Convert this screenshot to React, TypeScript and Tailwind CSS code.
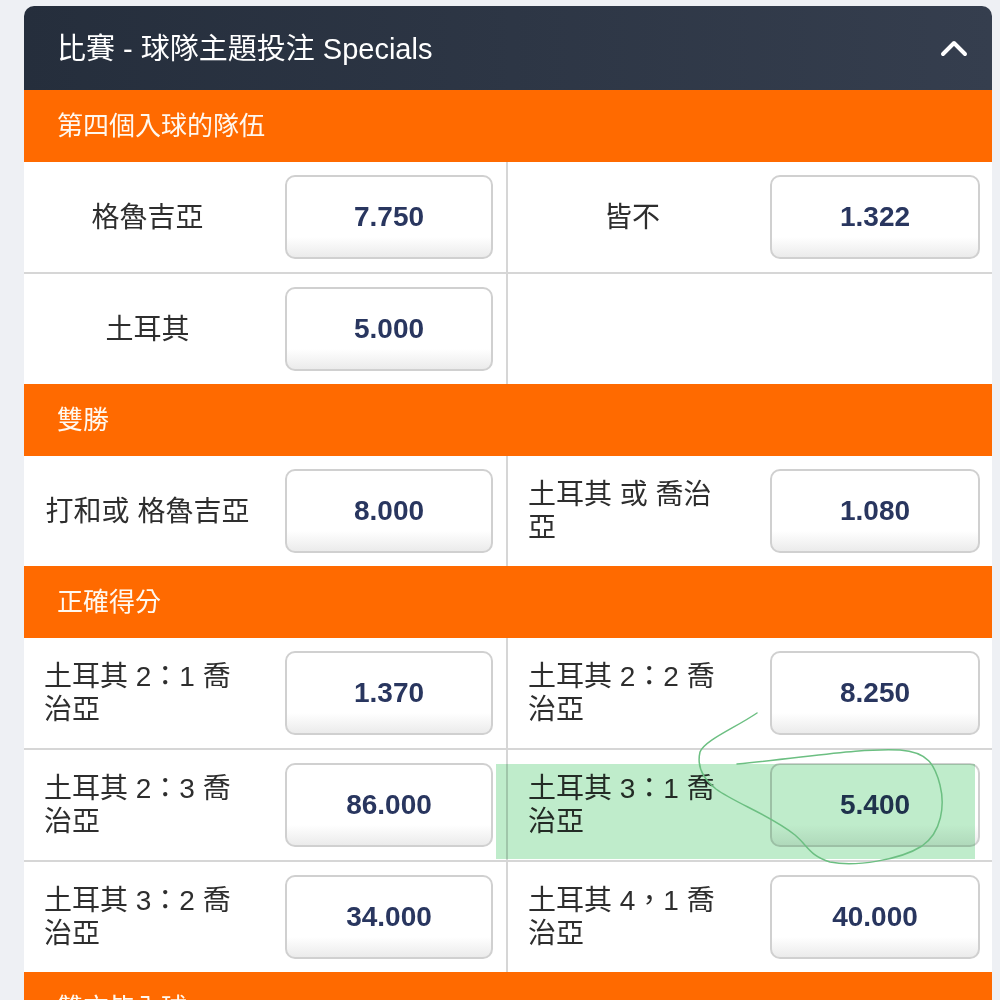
import { ReactElement } from "react";

interface Selection {
  label: string;
  odds: string;
  picked?: boolean;
}

interface Market {
  title: string;
  rows: (Selection | null)[][];
}

const markets: Market[] = [
  {
    title: "第四個入球的隊伍",
    rows: [
      [{ label: "格魯吉亞", odds: "7.750" }, { label: "皆不", odds: "1.322" }],
      [{ label: "土耳其", odds: "5.000" }, null],
    ],
  },
  {
    title: "雙勝",
    rows: [[{ label: "打和或 格魯吉亞", odds: "8.000" }, { label: "土耳其 或 喬治亞", odds: "1.080" }]],
  },
  {
    title: "正確得分",
    rows: [
      [{ label: "土耳其 2：1 喬治亞", odds: "1.370" }, { label: "土耳其 2：2 喬治亞", odds: "8.250" }],
      [{ label: "土耳其 2：3 喬治亞", odds: "86.000" }, { label: "土耳其 3：1 喬治亞", odds: "5.400", picked: true }],
      [{ label: "土耳其 3：2 喬治亞", odds: "34.000" }, { label: "土耳其 4，1 喬治亞", odds: "40.000" }],
    ],
  },
  {
    title: "雙方皆入球",
    rows: [],
  },
];

function Cell({ sel, left }: { sel: Selection | null; left: boolean }): ReactElement {
  return (
    <div className={`relative flex items-center h-[110px] ${left ? "border-r-2 border-[#d6d6d6] pr-[13px]" : "pr-[12px]"}`}>
      {sel && (
        <>
          <div className="flex flex-1 justify-center pl-[20px] pr-[34px]">
            <span className="text-[28px] leading-[33px] text-[#2e2e2e] text-left">{sel.label}</span>
          </div>
          <button className={`${left ? "w-[208px]" : "w-[210px]"} h-[84px] rounded-[10px] border-2 border-[#d0d0d0] bg-linear-to-b from-white from-75% to-[#ebebeb] text-[28px] font-bold text-[#29365f]`}>
            {sel.odds}
          </button>
          {sel.picked && (
            <div className="absolute left-[-12px] top-[14px] right-[17px] bottom-[1px] bg-[#bfeccb] mix-blend-multiply pointer-events-none" />
          )}
        </>
      )}
    </div>
  );
}

export default function App(): ReactElement {
  return (
    <div className="relative min-h-[1000px] bg-[#eef0f4] pt-[6px] pl-[24px] pr-[8px] font-['Liberation_Sans','Noto_Sans_CJK_TC',sans-serif]">
      <div className="bg-white rounded-t-[10px] overflow-hidden">
        <div className="flex items-center justify-between h-[84px] pt-[4px] pl-[33px] pr-[24px] bg-linear-to-r from-[#252e3c] to-[#353e4e]">
          <h2 className="text-[29px] text-white">比賽 - 球隊主題投注 Specials</h2>
          <svg width="28" height="18" viewBox="0 0 28 18" fill="none" className="mb-[4px]">
            <polyline points="3,15 14,4 25,15" stroke="white" strokeWidth="4" strokeLinecap="round" strokeLinejoin="round" />
          </svg>
        </div>
        {markets.map((market, i) => (
          <div key={i}>
            <div className="flex items-center h-[72px] pl-[33px] bg-[#ff6a00] text-[26px] text-[#fff8ef]">{market.title}</div>
            {market.rows.map((row, j) => (
              <div key={j} className={`grid grid-cols-2 ${j < market.rows.length - 1 ? "border-b-2 border-[#d6d6d6]" : ""}`}>
                <Cell sel={row[0]} left />
                <Cell sel={row[1]} left={false} />
              </div>
            ))}
          </div>
        ))}
      </div>
      <svg className="absolute left-0 top-0 pointer-events-none" width="1000" height="1000" viewBox="0 0 1000 1000" fill="none">
        <path
          d="M757 713 C735 728 705 740 700 752 C697 765 702 778 716 789 C735 803 770 815 795 835 C808 846 810 856 830 862 C855 867 900 860 922 846 C942 832 945 805 940 785 C935 765 928 752 900 750 C860 748 810 757 737 764"
          stroke="#6cbf82"
          strokeWidth="1.5"
          strokeLinecap="round"
        />
      </svg>
    </div>
  );
}
